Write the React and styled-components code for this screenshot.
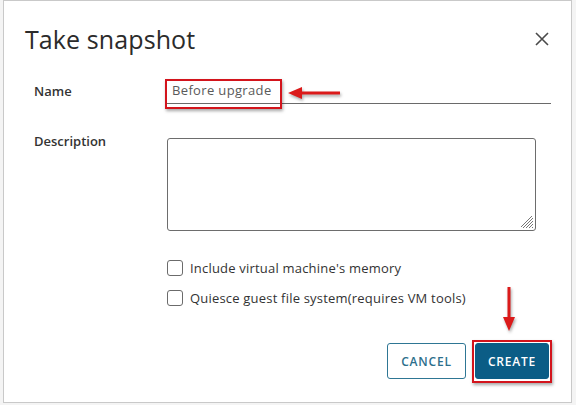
import React from "react";
import styled, { createGlobalStyle } from "styled-components";

const Global = createGlobalStyle`
  html, body { margin: 0; padding: 0; background: #f4f4f4; }
  body { font-family: "Open Sans", "Noto Sans", sans-serif; color: #313131; }
  * { box-sizing: border-box; }
`;

const Dialog = styled.div`
  position: relative;
  margin-left: 3px;
  width: 569px;
  height: 403px;
  background: #fff;
  border: 1px solid #c9c9c9;
  display: flex;
  flex-direction: column;
`;

const Header = styled.div`
  display: flex;
  align-items: center;
  justify-content: space-between;
  padding: 19px 20px 0 21px;
  height: 56px;
`;

const Title = styled.h1`
  margin: 0;
  font-size: 25px;
  font-weight: 400;
  color: #2b2b2b;
  letter-spacing: 0.1px;
`;

const Close = styled.button`
  border: 0;
  background: none;
  padding: 0;
  width: 16px;
  height: 16px;
  display: flex;
  color: #555;
  margin-top: 3px;
`;

const Form = styled.div`
  display: grid;
  grid-template-columns: 133px 1fr;
  padding: 0 20px 0 30px;
  margin-top: 12px;
`;

const Label = styled.label`
  font-size: 13px;
  font-weight: 600;
  color: #333;
  padding-top: ${(p) => p.$top || 0}px;
`;

const Field = styled.div`
  position: relative;
  margin-top: ${(p) => p.$mt || 0}px;
`;

const LineInput = styled.div`
  height: 35px;
  border-bottom: 1px solid #6a6a6a;
  font-size: 13px;
  letter-spacing: 0.35px;
  color: #5a5a5a;
  padding: 12px 0 0 5px;
`;

const Area = styled.textarea`
  display: block;
  width: 369px;
  height: 93px;
  border: 1px solid #6d6d6d;
  border-radius: 3px;
  resize: none;
  background: #fff;
  font-family: inherit;
`;

const Grip = styled.svg`
  position: absolute;
  left: 353px;
  top: 77px;
`;

const Checks = styled.div`
  grid-column: 2;
  display: flex;
  flex-direction: column;
  gap: 12px;
  margin-top: 28px;
`;

const CheckRow = styled.label`
  display: flex;
  align-items: center;
  gap: 7px;
  font-size: 13px;
  letter-spacing: 0.2px;
  color: #333;
`;

const Box = styled.span`
  width: 16px;
  height: 16px;
  border: 1px solid #6b6b6b;
  border-radius: 3px;
  background: #fff;
`;

const Footer = styled.div`
  display: flex;
  justify-content: flex-end;
  gap: 9px;
  padding: 0 22px 0 0;
  margin-top: 36px;
`;

const Btn = styled.button`
  position: relative;
  height: 36px;
  width: ${(p) => (p.$primary ? 74 : 79)}px;
  padding: 0;
  border-radius: 3px;
  font-family: inherit;
  font-size: 12px;
  font-weight: 600;
  letter-spacing: 0.8px;
  border: 1px solid ${(p) => (p.$primary ? "#0b5d86" : "#2e7694")};
  background: ${(p) => (p.$primary ? "#0b5d86" : "#fff")};
  color: ${(p) => (p.$primary ? "#fff" : "#2d6f8c")};
`;

const Mark = styled.span`
  position: absolute;
  border: 2px solid #d3141c;
  box-shadow: 1px 2px 3px rgba(0, 0, 0, 0.35);
  pointer-events: none;
  left: ${(p) => p.$l}px;
  top: ${(p) => p.$t}px;
  width: ${(p) => p.$w}px;
  height: ${(p) => p.$h}px;
`;

const Arrow = styled.svg`
  position: absolute;
  left: ${(p) => p.$l}px;
  top: ${(p) => p.$t}px;
  filter: drop-shadow(1px 2px 1.5px rgba(0, 0, 0, 0.35));
  overflow: visible;
`;

export default function App() {
  return (
    <>
      <Global />
      <Dialog>
        <Header>
          <Title>Take snapshot</Title>
          <Close aria-label="close">
            <svg width="14" height="14" viewBox="0 0 14 14">
              <path d="M1 1 L13 13 M13 1 L1 13" stroke="#4a4a4a" strokeWidth="1.6" />
            </svg>
          </Close>
        </Header>
        <Form>
          <Label $top={13}>Name</Label>
          <Field>
            <LineInput>Before upgrade</LineInput>
          </Field>
          <Label $top={28}>Description</Label>
          <Field $mt={34}>
            <Area />
            <Grip width="14" height="14" viewBox="0 0 14 14">
              <path d="M13 3 L3 13 M13 6 L6 13 M13 9 L9 13 M13 12 L12 13 M12 1 L1 12" stroke="#777" strokeWidth="1" />
            </Grip>
          </Field>
          <Checks>
            <CheckRow><Box />Include virtual machine's memory</CheckRow>
            <CheckRow><Box />Quiesce guest file system(requires VM tools)</CheckRow>
          </Checks>
        </Form>
        <Footer>
          <Btn>CANCEL</Btn>
          <Btn $primary>CREATE</Btn>
        </Footer>

        <Mark $l={161} $t={78} $w={117} $h={30} />
        <Arrow $l={284} $t={85} width="52" height="14" viewBox="0 0 52 14">
          <path d="M0 7 L14 1 L14 5.5 L52 5.5 L52 8.5 L14 8.5 L14 13 Z" fill="#db1a1a" />
        </Arrow>
        <Mark $l={468} $t={339} $w={80} $h={43} />
        <Arrow $l={498} $t={286} width="14" height="44" viewBox="0 0 14 44">
          <path d="M5.5 0 L8.5 0 L8.5 30 L13 30 L7 44 L1 30 L5.5 30 Z" fill="#db1a1a" />
        </Arrow>
      </Dialog>
    </>
  );
}
